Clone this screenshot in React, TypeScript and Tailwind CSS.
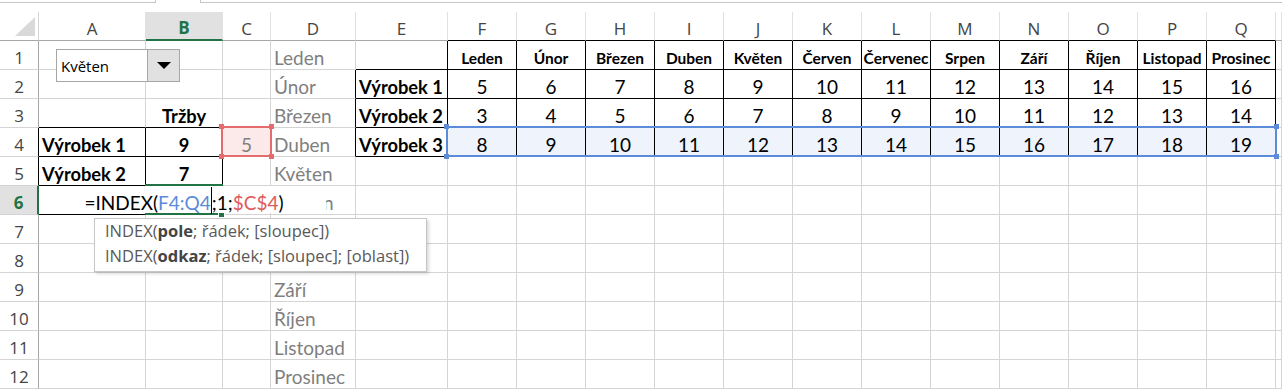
import React from "react";

const MONTHS = ["Leden", "Únor", "Březen", "Duben", "Květen", "Červen", "Červenec", "Srpen", "Září", "Říjen", "Listopad", "Prosinec"];
const COLS = ["A", "B", "C", "D", "E", "F", "G", "H", "I", "J", "K", "L", "M", "N", "O", "P", "Q", ""];

type Kind = "bold" | "boldc" | "num" | "month" | "hdr" | "ref";
type CellDef = { t: string; k: Kind };

function bordered(r: number, c: number): boolean {
  if ((r === 4 || r === 5) && (c === 1 || c === 2)) return true;
  if (r === 1 && c >= 6 && c <= 17) return true;
  if (r >= 2 && r <= 4 && c >= 5 && c <= 17) return true;
  return false;
}

function cellAt(r: number, c: number): CellDef | null {
  // D7 and D8 lie fully beneath the function tooltip
  if (c === 4 && r >= 1 && r !== 7 && r !== 8) return { t: MONTHS[r - 1], k: "month" };
  if (r === 1 && c >= 6 && c <= 17) return { t: MONTHS[c - 6], k: "hdr" };
  if (r >= 2 && r <= 4) {
    if (c === 5) return { t: `Výrobek ${r - 1}`, k: "bold" };
    if (c >= 6 && c <= 17) {
      const base = r === 2 ? 5 : r === 3 ? 3 : 8;
      return { t: String(base + c - 6), k: "num" };
    }
  }
  if (r === 3 && c === 2) return { t: "Tržby", k: "boldc" };
  if (r === 4 && c === 1) return { t: "Výrobek 1", k: "bold" };
  if (r === 5 && c === 1) return { t: "Výrobek 2", k: "bold" };
  if (r === 4 && c === 2) return { t: "9", k: "boldc" };
  if (r === 5 && c === 2) return { t: "7", k: "boldc" };
  if (r === 4 && c === 3) return { t: "5", k: "ref" };
  return null;
}

const kindCls: Record<Kind, string> = {
  bold: "justify-start pl-[3px] font-bold text-black text-[18.3px]",
  boldc: "justify-center font-bold text-black text-[18.3px]",
  num: "justify-center text-black text-[19px]",
  month: "justify-start pl-[3px] text-[#7f7f7f] text-[19px]",
  hdr: "justify-center font-bold text-black text-[15.5px]",
  ref: "justify-center text-[#7f7f7f] text-[19px]",
};

function renderCell(r: number, c: number) {
  const key = `${r}-${c}`;
  if (r === 0 && c === 0) {
    return (
      <div key={key} className="relative border-r border-b border-r-[#d4d4d4] border-b-[#a6a6a6] bg-white">
        <svg width="39" height="28" className="absolute left-0 top-0">
          <polygon points="35,5 35,24 15,24" fill="#d9d9d9" />
        </svg>
      </div>
    );
  }
  if (r === 0) {
    if (c === 2) {
      return (
        <div key={key} className="flex items-end justify-center pb-px leading-[20px] border-r border-r-[#e1e1e1] border-b-2 border-b-[#217346] bg-[#e1e1e1] [font-family:'Open_Sans',sans-serif] text-[17px] font-bold text-[#217346]">
          {COLS[c - 1]}
        </div>
      );
    }
    return (
      <div
        key={key}
        className={
          "flex items-end justify-center pb-px leading-[20px] border-r border-b border-r-[#e1e1e1] bg-white [font-family:'Open_Sans',sans-serif] text-[17px] text-[#444] " +
          (bordered(1, c) ? "border-b-black" : "border-b-[#a6a6a6]")
        }
      >
        {COLS[c - 1]}
      </div>
    );
  }
  if (c === 0) {
    if (r === 6) {
      return (
        <div key={key} className="flex items-end justify-center pb-px leading-[20px] border-r-2 border-b border-r-[#217346] border-b-[#d4d4d4] bg-[#e1e1e1] [font-family:'Open_Sans',sans-serif] text-[17px] font-bold text-[#217346]">
          {r}
        </div>
      );
    }
    return (
      <div
        key={key}
        className={
          "flex items-end justify-center pb-px leading-[20px] border-r border-b border-b-[#d4d4d4] bg-white [font-family:'Open_Sans',sans-serif] text-[17px] text-[#444] " +
          (bordered(r, 1) ? "border-r-black" : "border-r-[#a6a6a6]")
        }
      >
        {r}
      </div>
    );
  }
  const def = cellAt(r, c);
  const rb = bordered(r, c) || bordered(r, c + 1);
  const bb = bordered(r, c) || bordered(r + 1, c) || (r === 6 && c === 1);
  const bg = r === 4 && c >= 6 && c <= 17 ? "bg-[#eef3fc]" : r === 4 && c === 3 ? "bg-[#fce9e9]" : "bg-white";
  return (
    <div
      key={key}
      className={
        "flex items-end overflow-hidden whitespace-nowrap border-r border-b pb-px leading-[20px] [font-family:Lato,sans-serif] " +
        (rb ? "border-r-black " : "border-r-[#d4d4d4] ") +
        (bb ? "border-b-black " : "border-b-[#d4d4d4] ") +
        bg +
        " " +
        (def ? kindCls[def.k] : "")
      }
    >
      {def ? def.t : null}
    </div>
  );
}

function Corners({ color }: { color: string }) {
  return (
    <>
      <span className={"absolute -left-[4px] -top-[4px] h-[5px] w-[5px] " + color} />
      <span className={"absolute -right-[4px] -top-[4px] h-[5px] w-[5px] " + color} />
      <span className={"absolute -left-[4px] -bottom-[4px] h-[5px] w-[5px] " + color} />
      <span className={"absolute -right-[4px] -bottom-[4px] h-[5px] w-[5px] " + color} />
    </>
  );
}

export default function App() {
  const cells: React.ReactNode[] = [];
  for (let r = 0; r < 13; r++) {
    for (let c = 0; c < 19; c++) {
      cells.push(renderCell(r, c));
    }
  }
  return (
    <div className="relative h-[389px] w-[1282px] overflow-hidden bg-white">
      {/* top strip: name box + formula bar edges */}
      <div className="flex h-[12px] items-start">
        <div className="h-[3px] w-[156px] border-r border-b border-[#c6c6c6]" />
        <div className="w-[44px]" />
        <div className="h-[3px] flex-1 border-l border-b border-[#c6c6c6]" />
      </div>

      {/* sheet grid */}
      <div className="grid grid-cols-[39px_107px_77px_48px_85px_92px_repeat(12,69px)_6px] grid-rows-[repeat(13,29px)]">
        {cells}
      </div>

      {/* combo box form control */}
      <div className="absolute left-[56px] top-[49px] flex h-[33px] w-[124px] border border-[#a6a6a6] bg-white">
        <div className="flex flex-1 items-center pl-[4px] pt-[2px] [font-family:'Open_Sans',sans-serif] text-[15px] text-black">
          Květen
        </div>
        <div className="flex w-[32px] items-center justify-center border-l border-[#a6a6a6] bg-[#e1e1e1]">
          <svg width="14" height="8" viewBox="0 0 14 8">
            <polygon points="0,0 14,0 7,7" fill="#000" />
          </svg>
        </div>
      </div>

      {/* $C$4 reference highlight */}
      <div className="pointer-events-none absolute left-[221px] top-[126px] h-[31px] w-[51px] border-2 border-[#e46c6c]">
        <Corners color="bg-[#e46c6c]" />
      </div>

      {/* F4:Q4 reference highlight */}
      <div className="pointer-events-none absolute left-[446px] top-[126px] h-[31px] w-[831px] border-2 border-[#5b8bd9]">
        <Corners color="bg-[#5b8bd9]" />
      </div>

      {/* active cell B6 selection with fill handle */}
      <div className="pointer-events-none absolute left-[145px] top-[184px] h-[31px] w-[78px] border-2 border-[#217346]">
        <span className="absolute -right-[4px] -bottom-[5px] h-[7px] w-[7px] border border-white bg-[#217346]" />
      </div>

      {/* in-cell editor, text centred on B6 and spilling over neighbours */}
      <div className="absolute left-[39px] top-[186px] flex h-[27px] w-[287px] items-end justify-center whitespace-nowrap bg-white pl-[3px] leading-[20px] [font-family:Lato,sans-serif] text-[19px] text-black">
        <span>=INDEX(</span>
        <span className="text-[#5b8bd9]">F4:Q4</span>
        <span className="mb-[-1px] inline-block h-[27px] w-px self-end bg-black" />
        <span>;1;</span>
        <span className="text-[#e05a5a]">$C$4</span>
        <span>)</span>
      </div>

      {/* function tooltip */}
      <div className="absolute left-[94px] top-[218px] h-[54px] w-[333px] border border-[#c6c6c6] bg-white pl-[10px] shadow-[2px_2px_3px_rgba(0,0,0,0.15)] [font-family:'Open_Sans',sans-serif] text-[16.5px] leading-[24.5px] text-[#595959]">
        <div>
          INDEX(<b className="text-[#444]">pole</b>; řádek; [sloupec])
        </div>
        <div>
          INDEX(<b className="text-[#444]">odkaz</b>; řádek; [sloupec]; [oblast])
        </div>
      </div>
    </div>
  );
}
